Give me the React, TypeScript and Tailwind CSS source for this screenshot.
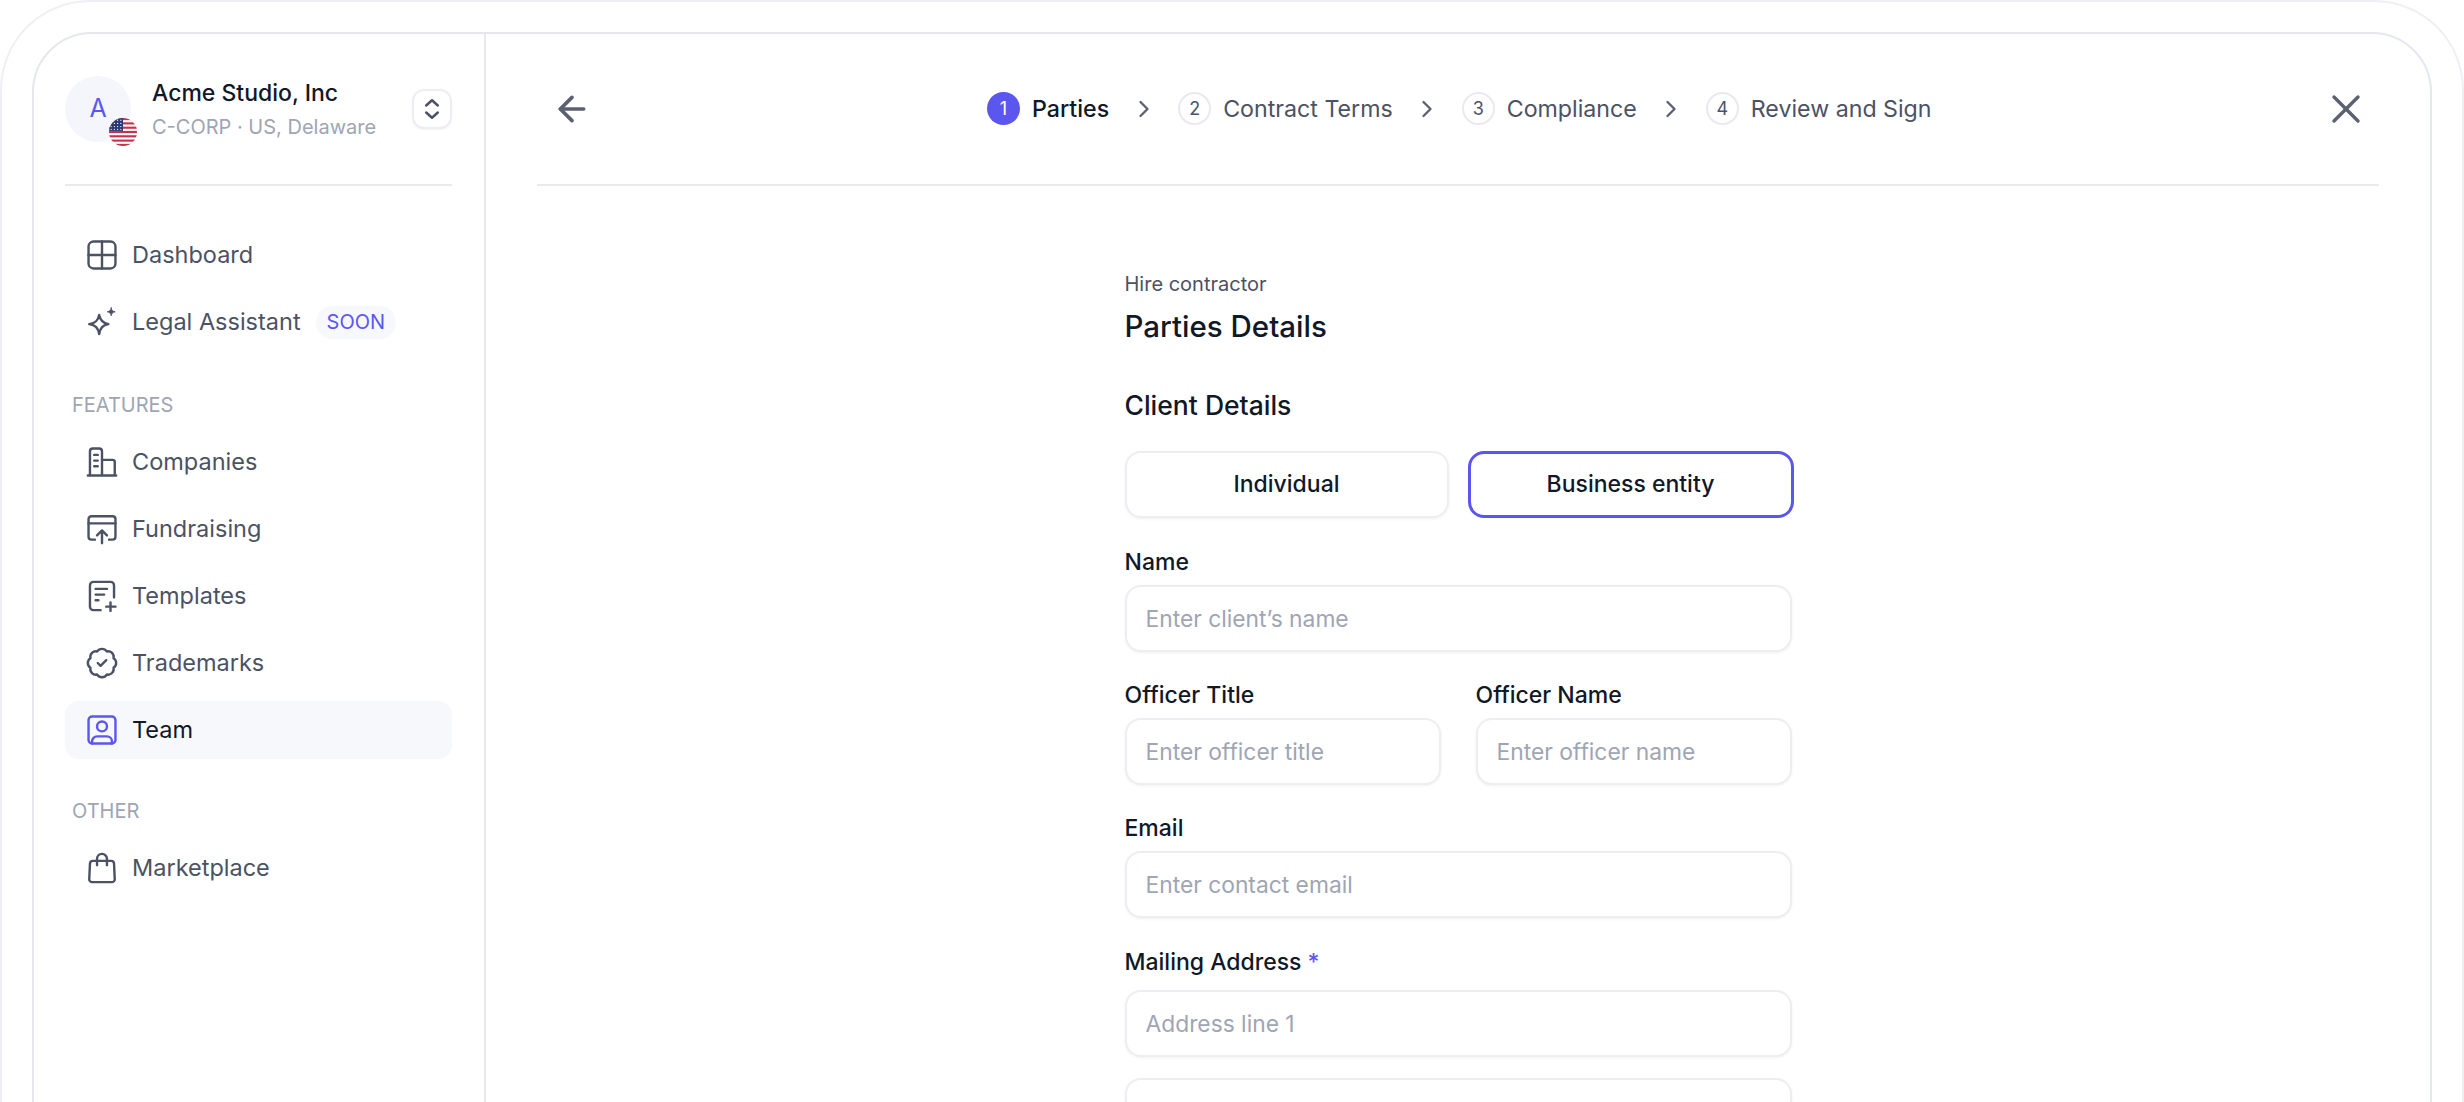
import { ArrowLeft, BadgeCheck, ChevronRight, X } from 'lucide-react';
import type { ReactNode } from 'react';

function IconBase({ children }: { children: ReactNode }) {
  return (
    <svg
      viewBox="0 0 24 24"
      fill="none"
      stroke="currentColor"
      strokeWidth="1.7"
      strokeLinecap="round"
      strokeLinejoin="round"
      className="w-[34px] h-[34px] shrink-0"
    >
      {children}
    </svg>
  );
}

const DashboardIcon = () => (
  <IconBase>
    <rect x="2.5" y="2.5" width="19" height="19" rx="3.5" />
    <path d="M12 2.5v19M2.5 12h19" />
  </IconBase>
);

const SparkIcon = () => (
  <IconBase>
    <path d="M10 7c.8 4 2.5 5.8 6.5 6.5C12.5 14.300 10.800 16 10 20.500 9.200 16 7.500 14.300 3 13.500 7.500 12.800 9.200 11 10 7Z" />
    <path
      d="M18.500 2c.3 1.800 1 2.500 2.800 2.800-1.800.3-2.500 1-2.800 2.800-.3-1.800-1-2.500-2.800-2.800 1.800-.3 2.500-1 2.800-2.800Z"
      fill="currentColor"
      strokeWidth="0.6"
    />
  </IconBase>
);

const CompaniesIcon = () => (
  <IconBase>
    <path d="M2 21.500h20M3.500 21.500V4.500a2 2 0 0 1 2-2h4.500a2 2 0 0 1 2 2v17M12 10.500h7.500a1.500 1.500 0 0 1 1.500 1.500v9.500" />
    <path d="M6.500 7h2.500M6.500 11h2.500M6.500 15h2.500" />
  </IconBase>
);

const FundraisingIcon = () => (
  <IconBase>
    <path d="M7 19.500H4.500a2 2 0 0 1-2-2V5a2 2 0 0 1 2-2h15a2 2 0 0 1 2 2v12.500a2 2 0 0 1-2 2H17" />
    <path d="M2.500 8h19M12 22v-9M8.500 16.500 12 13l3.500 3.500" />
  </IconBase>
);

const TemplatesIcon = () => (
  <IconBase>
    <path d="M11 22H6a2.500 2.500 0 0 1-2.500-2.500v-15A2.500 2.500 0 0 1 6 2h12a2.500 2.500 0 0 1 2.500 2.500V13" />
    <path d="M7.500 7h8M7.500 11h6M7.500 15h2M18 16.500v6M15 19.500h6.500" />
  </IconBase>
);

const TeamIcon = () => (
  <IconBase>
    <rect x="2.500" y="2.500" width="19" height="19" rx="2.500" />
    <circle cx="12" cy="9.500" r="3.500" />
    <path d="M5 21.500v-1.500a3.500 3.500 0 0 1 3.500-3.500h7a3.500 3.500 0 0 1 3.500 3.500v1.500" />
  </IconBase>
);

const BagIcon = () => (
  <IconBase>
    <path d="M5.500 7h13a2 2 0 0 1 2 1.900l.500 11a2 2 0 0 1-2 2.100H5a2 2 0 0 1-2-2.100l.500-11a2 2 0 0 1 2-1.900Z" />
    <path d="M8.500 10V5.500a3.500 3.500 0 0 1 7 0V10" />
  </IconBase>
);

function UsFlag() {
  return (
    <svg viewBox="0 0 26 26" className="absolute left-[44px] top-[42px] w-[28px] h-[28px]">
      <defs>
        <clipPath id="flag-circle">
          <circle cx="13" cy="13" r="13" />
        </clipPath>
      </defs>
      <g clipPath="url(#flag-circle)">
        <rect width="26" height="26" fill="#ffffff" />
        {[0, 4, 8, 12, 16, 20, 24].map((y) => (
          <rect key={y} x="0" y={y} width="26" height="2" fill="#c8324e" />
        ))}
        <rect width="13" height="12" fill="#2c3a72" />
        {[2, 5, 8, 11].map((x) =>
          [2, 5, 8, 10.500].map((y) => <circle key={`${x}-${y}`} cx={x} cy={y} r="0.6" fill="#ffffff" />)
        )}
      </g>
    </svg>
  );
}

const NAV_MAIN = [
  { label: 'Dashboard', icon: <DashboardIcon /> },
  { label: 'Legal Assistant', icon: <SparkIcon />, badge: 'SOON' },
];

const NAV_FEATURES = [
  { label: 'Companies', icon: <CompaniesIcon /> },
  { label: 'Fundraising', icon: <FundraisingIcon /> },
  { label: 'Templates', icon: <TemplatesIcon /> },
  { label: 'Trademarks', icon: <BadgeCheck className="w-[34px] h-[34px] shrink-0" strokeWidth={1.7} /> },
  { label: 'Team', icon: <TeamIcon />, active: true },
];

const STEPS = ['Parties', 'Contract Terms', 'Compliance', 'Review and Sign'];

function NavItem({ label, icon, badge, active }: { label: string; icon: ReactNode; badge?: string; active?: boolean }) {
  return (
    <div
      className={
        active
          ? 'h-[58px] flex items-center gap-[13px] pl-[20px] rounded-[14px] bg-[#f7f8fc] text-[#111827]'
          : 'h-[58px] flex items-center gap-[13px] pl-[20px] rounded-[14px] text-[#4b5263]'
      }
    >
      <span className={active ? 'text-[#5b57ee] flex' : 'flex'}>{icon}</span>
      <span className="text-[23.500px] leading-[30px]">{label}</span>
      {badge && (
        <span className="ml-[2px] h-[33px] px-[11px] flex items-center rounded-full bg-[#f7f8fc] text-[#5b57ee] text-[20px]">
          {badge}
        </span>
      )}
    </div>
  );
}

function Sidebar() {
  return (
    <aside className="w-[452px] shrink-0 border-r-2 border-[#e8eaf0] pl-[31px] pr-[32px]">
      <div className="h-[152px] flex items-center border-b-2 border-[#e8eaf0]">
        <div className="relative w-[66px] h-[66px] rounded-full bg-[#f5f6fb] flex items-center justify-center text-[#5b57ee] text-[25px] shrink-0">
          A
          <UsFlag />
        </div>
        <div className="ml-[21px] flex-1">
          <div className="text-[23px] leading-[30px] font-medium text-[#111827]">Acme Studio, Inc</div>
          <div className="text-[20px] leading-[26px] mt-[6px] text-[#a0a5b3]">C-CORP · US, Delaware</div>
        </div>
        <button className="w-[40px] h-[40px] rounded-[12px] border-2 border-[#eceef3] flex items-center justify-center text-[#4b5263] shadow-[0_1px_2px_rgba(20,24,40,0.05)]">
          <svg viewBox="0 0 24 24" fill="none" stroke="currentColor" strokeWidth="2.100" strokeLinecap="round" strokeLinejoin="round" className="w-[28px] h-[28px]">
            <path d="M7 9l5-4.500L17 9M7 15l5 4.500L17 15" />
          </svg>
        </button>
      </div>

      <div className="mt-[40px] flex flex-col gap-[9px]">
        {NAV_MAIN.map((item) => (
          <NavItem key={item.label} {...item} />
        ))}
      </div>

      <div className="mt-[42px] mb-[16px] pl-[7px] text-[20px] leading-[24px] text-[#a0a5b3]">FEATURES</div>
      <div className="flex flex-col gap-[9px]">
        {NAV_FEATURES.map((item) => (
          <NavItem key={item.label} {...item} />
        ))}
      </div>

      <div className="mt-[40px] mb-[16px] pl-[7px] text-[20px] leading-[24px] text-[#a0a5b3]">OTHER</div>
      <NavItem label="Marketplace" icon={<BagIcon />} />
    </aside>
  );
}

function Stepper() {
  return (
    <div className="ml-[395px] flex items-center gap-[20.500px]">
      {STEPS.map((step, i) => (
        <div key={step} className="flex items-center gap-[20.500px]">
          {i > 0 && <ChevronRight className="w-[28px] h-[28px] text-[#5b6170]" strokeWidth={2} />}
          <div className="flex items-center gap-[12px]">
            {i === 0 ? (
              <span className="w-[33px] h-[33px] rounded-full bg-[#5b57ee] text-white text-[18px] flex items-center justify-center">1</span>
            ) : (
              <span className="w-[33px] h-[33px] rounded-full border-2 border-[#e8eaf0] text-[#4b5263] text-[18px] flex items-center justify-center">{i + 1}</span>
            )}
            <span className={i === 0 ? 'text-[23.200px] font-medium text-[#111827]' : 'text-[23.200px] text-[#4b5263]'}>{step}</span>
          </div>
        </div>
      ))}
    </div>
  );
}

function TextInput({ placeholder }: { placeholder?: string }) {
  return (
    <input
      placeholder={placeholder}
      className="block w-full h-[67px] px-[19px] rounded-[16px] border-2 border-[#eceef2] bg-white text-[22.800px] placeholder:text-[#a0a5b3] outline-none shadow-[0_1px_3px_rgba(20,24,40,0.06)]"
    />
  );
}

function Field({ label, placeholder }: { label: string; placeholder: string }) {
  return (
    <div className="flex-1 min-w-0">
      <label className="block text-[23px] leading-[28px] font-medium text-[#111827] mb-[9px]">{label}</label>
      <TextInput placeholder={placeholder} />
    </div>
  );
}

export default function App() {
  return (
    <div className="h-[1102px] overflow-hidden bg-white font-['Inter',sans-serif]">
      <div className="w-[2464px] h-[1200px] border-2 border-[#eef0f6] rounded-[90px] p-[30px]">
        <div className="h-full border-2 border-[#e5e7ee] rounded-[60px] flex">
          <Sidebar />
          <main className="flex-1 min-w-0 px-[51px]">
            <header className="h-[152px] border-b-2 border-[#e8eaf0] flex items-center pl-[15px] pr-[9px]">
              <ArrowLeft className="w-[40px] h-[40px] text-[#5b6170]" strokeWidth={2.200} />
              <Stepper />
              <X className="ml-auto w-[48px] h-[48px] text-[#5b6170]" strokeWidth={1.700} />
            </header>

            <section className="w-[667px] mx-auto pt-[86px]">
              <p className="text-[20px] leading-[24px] text-[#4b5263]">Hire contractor</p>
              <h1 className="mt-[12px] text-[29.500px] leading-[36px] font-medium text-[#111827]">Parties Details</h1>
              <h2 className="mt-[45px] text-[26.500px] leading-[32px] font-medium text-[#111827]">Client Details</h2>

              <div className="mt-[30px] -mr-[2px] flex gap-[19px]">
                <button className="flex-1 h-[67px] rounded-[16px] border-2 border-[#eceef2] text-[23px] font-medium text-[#111827] shadow-[0_1px_3px_rgba(20,24,40,0.06)]">
                  Individual
                </button>
                <button className="flex-1 h-[67px] rounded-[16px] border-[3px] border-[#5b57ee] text-[23px] font-medium text-[#111827]">
                  Business entity
                </button>
              </div>

              <div className="mt-[30px]">
                <Field label="Name" placeholder="Enter client’s name" />
              </div>
              <div className="mt-[29px] flex gap-[35px]">
                <Field label="Officer Title" placeholder="Enter officer title" />
                <Field label="Officer Name" placeholder="Enter officer name" />
              </div>
              <div className="mt-[29px]">
                <Field label="Email" placeholder="Enter contact email" />
              </div>

              <label className="block mt-[30px] mb-[14px] text-[23px] leading-[28px] font-medium text-[#111827]">
                Mailing Address <span className="text-[#5b57ee]">*</span>
              </label>
              <div className="flex flex-col gap-[21px]">
                <TextInput placeholder="Address line 1" />
                <TextInput />
              </div>
            </section>
          </main>
        </div>
      </div>
    </div>
  );
}
